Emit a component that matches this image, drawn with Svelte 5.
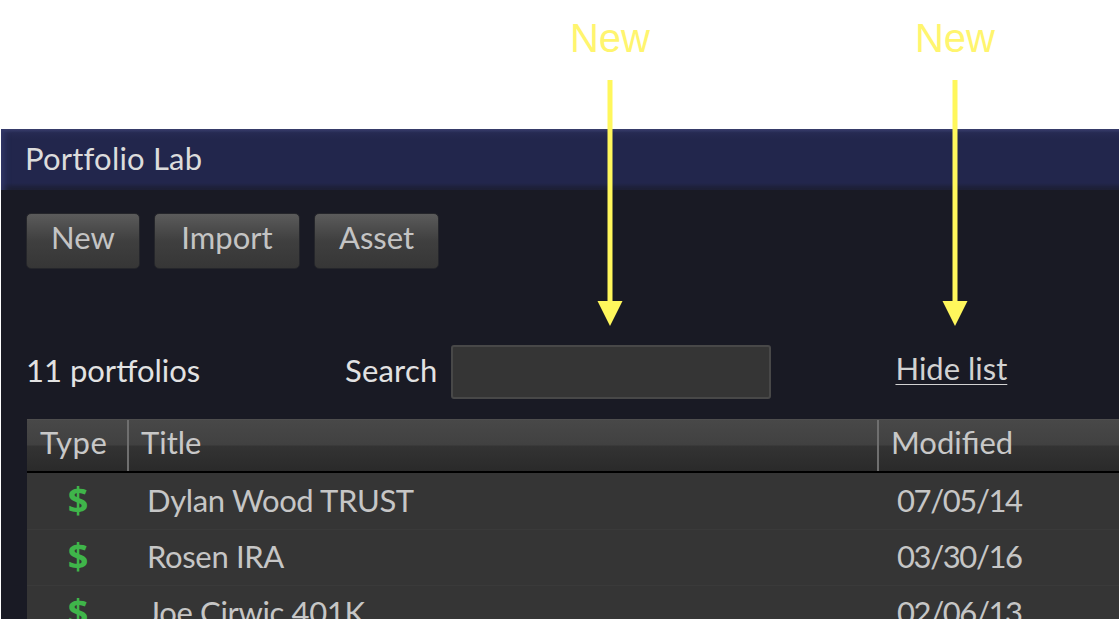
<script lang="ts">
    const portfolios = [
        { title: 'Dylan Wood TRUST', modified: '07/05/14' },
        { title: 'Rosen IRA', modified: '03/30/16' },
        { title: 'Joe Cirwic 401K', modified: '02/06/13' }
    ];
    const buttons = ['New', 'Import', 'Asset'];
    const callouts = [
        { x: 610, label: 'New' },
        { x: 955, label: 'New' }
    ];
</script>

<div class="page">
    <div class="panel">
        <header class="titlebar">Portfolio Lab</header>

        <div class="toolbar">
            {#each buttons as b}
                <button class="btn">{b}</button>
            {/each}
        </div>

        <div class="filters">
            <span class="count">11 portfolios</span>
            <label class="search">
                <span>Search</span>
                <input type="text" />
            </label>
            <a class="hide" href="#hide">Hide list</a>
        </div>

        <div class="table">
            <div class="thead">
                <div class="th type">Type</div>
                <div class="th title">Title</div>
                <div class="th modified">Modified</div>
            </div>
            {#each portfolios as p}
                <div class="row">
                    <div class="dollar">$</div>
                    <div class="name">{p.title}</div>
                    <div class="date">{p.modified}</div>
                </div>
            {/each}
        </div>
    </div>

    <!-- annotations lying over the screenshot -->
    {#each callouts as c}
        <div class="callout" style={`left:${c.x - 50}px`}>
            <div class="callout-label">{c.label}</div>
            <svg width="100" height="246" viewBox="0 0 100 246" aria-hidden="true">
                <rect x="47.5" y="0" width="5" height="222" fill="#fff75c" />
                <path d="M37.5 221H62.5L50 246Z" fill="#fff75c" />
            </svg>
        </div>
    {/each}
</div>

<style>
    :global(body){ margin: 0; background: #fff; }

    .page{
        position: relative;
        width: 1119px; height: 619px;
        overflow: hidden;
        background: #fff;
        padding-top: 129px;
        box-sizing: border-box;
        font-family: Lato, "Open Sans", sans-serif;
        font-size: 31px;
    }
    .panel{
        margin-left: 1px;
        height: 490px;
        background: #191a24;
        color: #d6d6d6;
    }

    .titlebar{
        height: 61px; box-sizing: border-box;
        padding: 11px 0 0 24px;
        line-height: 36px; letter-spacing: .2px;
        color: #dcdcdc;
        background: linear-gradient(180deg, #3a3f6e 0, #262a52 4px, #22264c 10px, #22264c 54px, #1c1e30 61px);
        box-shadow: inset 7px 0 6px -4px #33386a;
    }

    .toolbar{
        display: flex; gap: 14px;
        padding: 23px 0 0 25px;
    }
    .btn{
        height: 56px; box-sizing: border-box;
        width: 114px;
        padding: 0 0 8px;
        border: 1px solid #25262b; border-radius: 5px;
        background: linear-gradient(180deg, #5b5b5b 0, #3f3f3f 50%, #363636 100%);
        color: #c4c4c4;
        font: inherit;
    }
    .btn:nth-child(2){ width: 146px; }
    .btn:nth-child(3){ width: 125px; }

    .filters{
        display: flex; align-items: center;
        height: 54px;
        margin-top: 76px;
        padding-left: 25px;
    }
    .count{
        width: 319px;
        padding-bottom: 4px;
        color: #e2e2e2;
    }
    .search{
        display: flex; align-items: center; gap: 14px;
        color: #e2e2e2;
    }
    .search span{ padding-bottom: 4px; letter-spacing: .2px; }
    .search input{
        width: 320px; height: 54px; box-sizing: border-box;
        background: #353535;
        border: 2px solid #484848; border-radius: 3px;
    }
    .hide{
        margin: -8px 0 0 124px;
        line-height: 32px;
        color: #d2d2d2;
        text-decoration: underline; text-decoration-thickness: 1px; text-underline-offset: 4px;
    }

    .table{
        margin: 20px 0 0 26px;
        border-top: 1px solid #4e4e4e;
    }
    .thead{
        display: grid; grid-template-columns: 102px 750px 1fr;
        height: 51px;
        border-bottom: 2px solid #000;
        background: linear-gradient(180deg, #484848 0, #414141 48%, #333 52%, #2a2a2a 100%);
    }
    .th{
        line-height: 44px;
        color: #c8c8c8;
        padding-left: 13px;
        box-sizing: border-box;
    }
    .th.type{ border-right: 2px solid #6f6f6f; letter-spacing: .5px; }
    .th.title{ border-right: 2px solid #6f6f6f; padding-left: 12px; }
    .th.modified{ padding-left: 12px; }

    .row{
        display: grid; grid-template-columns: 102px 750px 1fr;
        align-items: center;
        height: 56px; box-sizing: border-box;
        padding-bottom: 3px;
        background: #353535;
        color: #c6c6c6;
    }
    .row + .row{ border-top: 1px solid #3a3a3a; padding-bottom: 4px; }
    .dollar{
        text-align: center;
        font-family: "Open Sans", sans-serif;
        font-size: 36px; font-weight: 700; line-height: 40px;
        color: #3fb54a;
    }
    .name{ padding-left: 18px; letter-spacing: -.35px; }
    .date{ padding-left: 18px; letter-spacing: -1.4px; }

    .callout{
        position: absolute; top: 0;
        width: 100px;
        text-align: center;
    }
    .callout-label{
        height: 80px;
        font-family: "Liberation Sans", Arial, sans-serif;
        font-size: 40px; line-height: 76px;
        color: #fff56e;
    }
    .callout svg{ display: block; }
</style>
